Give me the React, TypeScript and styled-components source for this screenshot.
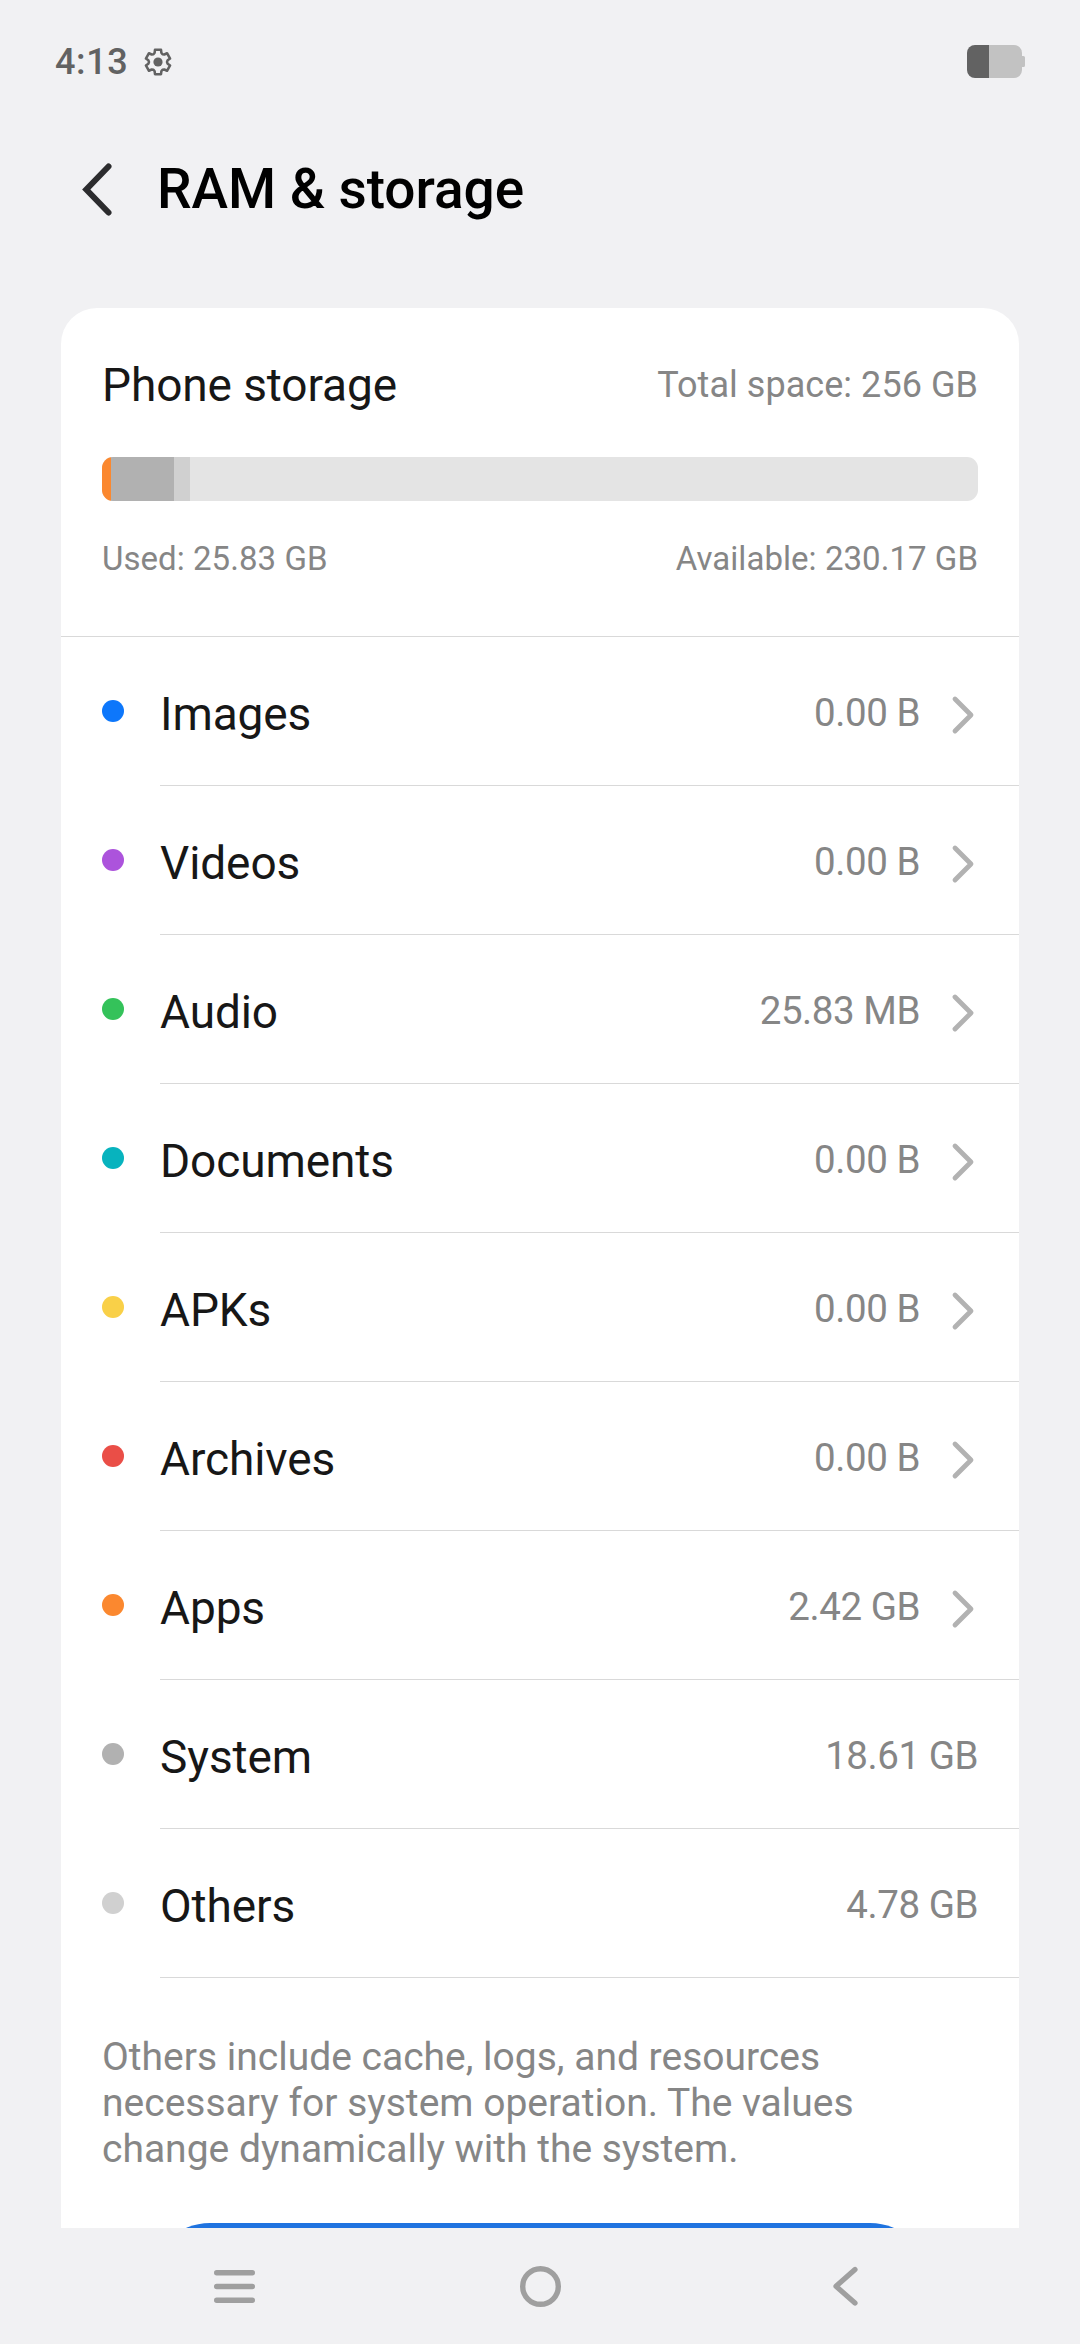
import React from "react";
import styled, { createGlobalStyle } from "styled-components";

const GlobalStyle = createGlobalStyle`
  html, body { margin: 0; padding: 0; background: #f1f1f3; }
  *, *::before, *::after { box-sizing: border-box; }
`;

const Screen = styled.div`
  display: flex;
  flex-direction: column;
  width: 1080px;
  height: 2344px;
  overflow: hidden;
  background: #f1f1f3;
  font-family: Roboto, "Noto Sans", sans-serif;
  color: #171717;
`;

const StatusBar = styled.header`
  flex: none;
  display: flex;
  align-items: center;
  height: 123px;
  padding: 0 55px 0 55px;
`;

const Clock = styled.span`
  font-size: 36px;
  font-weight: 500;
  line-height: 42px;
  letter-spacing: 0.6px;
  color: #626262;
  margin-right: 16px;
`;

const Spacer = styled.div`
  flex: 1;
`;

const Svg = styled.svg`
  display: block;
  flex: none;
`;

const TitleBar = styled.div`
  flex: none;
  display: flex;
  align-items: center;
  gap: 43px;
  height: 132px;
  padding: 0 80px;
`;

const Title = styled.h1`
  margin: 0;
  font-size: 55px;
  font-weight: 500;
  line-height: 64px;
  letter-spacing: -0.05px;
  color: #000;
`;

const Content = styled.main`
  flex: 1;
  min-height: 0;
  padding: 53px 61px 0;
  overflow: hidden;
`;

const Card = styled.section`
  width: 958px;
  height: 2100px;
  background: #fff;
  border-radius: 36px 36px 0 0;
`;

const Summary = styled.div`
  display: flex;
  flex-direction: column;
  height: 329px;
  padding: 50px 41px 0;
  border-bottom: 1px solid #d9d9d9;
`;

const SummaryLine = styled.div`
  display: flex;
  align-items: center;
  justify-content: space-between;
  height: 54px;
`;

const SummaryTitle = styled.h2`
  margin: 0;
  font-size: 46px;
  font-weight: 400;
  line-height: 54px;
  letter-spacing: -0.1px;
`;

const Caption = styled.span<{ $size: number }>`
  font-size: ${(p) => p.$size}px;
  letter-spacing: 0.05px;
  line-height: 44px;
  color: #868686;
`;

const Bar = styled.div`
  display: flex;
  height: 44px;
  margin: 45px 0 31px;
  border-radius: 11px;
  overflow: hidden;
  background: #e4e4e4;
`;

const Segment = styled.div<{ $width: number; $color: string }>`
  width: ${(p) => p.$width}px;
  background: ${(p) => p.$color};
`;

const Row = styled.div`
  display: flex;
  align-items: center;
  height: 149px;
  padding-left: 41px;
`;

const Dot = styled.span<{ $color: string }>`
  flex: none;
  width: 22px;
  height: 22px;
  margin: 0 36px 1px 0;
  border-radius: 50%;
  background: ${(p) => p.$color};
`;

const RowBody = styled.div`
  flex: 1;
  display: flex;
  align-items: center;
  height: 149px;
  padding: 6px 41px 0 0;
  border-bottom: 1px solid #d9d9d9;
`;

const RowLabel = styled.span`
  flex: 1;
  font-size: 46px;
  line-height: 54px;
  letter-spacing: -0.1px;
`;

const RowValue = styled.span`
  font-size: 38.5px;
  line-height: 46px;
  padding-bottom: 3px;
  letter-spacing: -0.45px;
  color: #868686;
`;

const ChevronSlot = styled.span`
  display: flex;
  width: 58px;
  padding: 1px 0 0 30px;
`;

const Note = styled.p`
  width: 820px;
  margin: 0;
  padding: 56px 0 0 41px;
  font-size: 39px;
  line-height: 46px;
  color: #868686;
`;

const PrimaryButton = styled.button`
  display: block;
  width: 780px;
  height: 120px;
  margin: 51px auto 0;
  border: 0;
  border-radius: 60px;
  background: #1f73e0;
`;

const NavBar = styled.nav`
  flex: none;
  display: grid;
  grid-template-columns: repeat(3, 306px);
  justify-content: center;
  justify-items: center;
  align-items: center;
  height: 116px;
  background: #f1f1f3;
`;

type Item = { label: string; value: string; color: string; link?: boolean };

const items: Item[] = [
  { label: "Images", value: "0.00 B", color: "#0d77fb", link: true },
  { label: "Videos", value: "0.00 B", color: "#ac53dc", link: true },
  { label: "Audio", value: "25.83 MB", color: "#34c25a", link: true },
  { label: "Documents", value: "0.00 B", color: "#07b3be", link: true },
  { label: "APKs", value: "0.00 B", color: "#f9d048", link: true },
  { label: "Archives", value: "0.00 B", color: "#ea4e47", link: true },
  { label: "Apps", value: "2.42 GB", color: "#fb882f", link: true },
  { label: "System", value: "18.61 GB", color: "#b1b1b1" },
  { label: "Others", value: "4.78 GB", color: "#d0d0d0" },
];

// Six-toothed gear outline: [radius, degrees from the tooth's centre line]
const toothProfile = [
  [12.6, -14],
  [12.6, 14],
  [9.8, 20],
  [9, 30],
  [9.8, 40],
];
const gearPoints = Array.from({ length: 6 }, (_, tooth) =>
  toothProfile.map(([radius, offset]) => {
    const angle = ((tooth * 60 + offset - 90) * Math.PI) / 180;
    return `${(14 + radius * Math.cos(angle)).toFixed(2)},${(14 + radius * Math.sin(angle)).toFixed(2)}`;
  })
)
  .flat()
  .join(" ");

const GearIcon = () => (
  <Svg width="28" height="28" viewBox="0 0 28 28">
    <polygon points={gearPoints} fill="none" stroke="#626262" strokeWidth="2.5" strokeLinejoin="round" />
    <circle cx="14" cy="14" r="4.6" fill="#626262" />
  </Svg>
);

const BatteryIcon = () => (
  <Svg width="58" height="33" viewBox="0 0 58 33">
    <path
      d="M9 0h38a8 8 0 0 1 8 8v3h1.500a1.500 1.500 0 0 1 1.500 1.500v8a1.500 1.500 0 0 1-1.500 1.500H55v3a8 8 0 0 1-8 8H9z"
      fill="#c2c2c2"
    />
    <path d="M22 0H8a8 8 0 0 0-8 8v17a8 8 0 0 0 8 8h14z" fill="#626262" />
  </Svg>
);

export default function App() {
  return (
    <>
      <GlobalStyle />
      <Screen>
        <StatusBar>
          <Clock>4:13</Clock>
          <GearIcon />
          <Spacer />
          <BatteryIcon />
        </StatusBar>
        <TitleBar>
          <Svg width="34" height="56" viewBox="0 0 34 56" aria-label="Back">
            <path d="M28.500 5.500 6.300 28.500 28.500 51.500" fill="none" stroke="#2c2c2e" strokeWidth="6" strokeLinecap="round" />
          </Svg>
          <Title>RAM &amp; storage</Title>
        </TitleBar>
        <Content>
          <Card>
            <Summary>
              <SummaryLine>
                <SummaryTitle>Phone storage</SummaryTitle>
                <Caption $size={36}>Total space: 256 GB</Caption>
              </SummaryLine>
              <Bar>
                <Segment $width={9} $color="#fb882f" />
                <Segment $width={63} $color="#b1b1b1" />
                <Segment $width={16} $color="#d0d0d0" />
              </Bar>
              <SummaryLine>
                <Caption $size={33}>Used: 25.83 GB</Caption>
                <Caption $size={33}>Available: 230.17 GB</Caption>
              </SummaryLine>
            </Summary>
            {items.map((item) => (
              <Row key={item.label}>
                <Dot $color={item.color} />
                <RowBody>
                  <RowLabel>{item.label}</RowLabel>
                  <RowValue>{item.value}</RowValue>
                  {item.link && (
                    <ChevronSlot>
                      <Svg width="26" height="42" viewBox="0 0 26 42">
                        <path d="M5 5 21 21 5 37" fill="none" stroke="#b2b2b2" strokeWidth="4.800" strokeLinecap="round" strokeLinejoin="round" />
                      </Svg>
                    </ChevronSlot>
                  )}
                </RowBody>
              </Row>
            ))}
            <Note>
              Others include cache, logs, and resources necessary for system operation. The values
              change dynamically with the system.
            </Note>
            <PrimaryButton />
          </Card>
        </Content>
        <NavBar>
          <Svg width="41" height="33" viewBox="0 0 41 33">
            <path d="M2.700 2.700h35.600M2.700 16.500h35.600M2.700 30.300h35.600" stroke="#9f9f9f" strokeWidth="5.400" strokeLinecap="round" />
          </Svg>
          <Svg width="41" height="41" viewBox="0 0 41 41">
            <circle cx="20.5" cy="20.500" r="17.800" fill="none" stroke="#9f9f9f" strokeWidth="5.400" />
          </Svg>
          <Svg width="26" height="40" viewBox="0 0 26 40">
            <path d="M22 3.500 3 20.300 22 37" fill="none" stroke="#9f9f9f" strokeWidth="5.200" strokeLinecap="round" strokeLinejoin="round" />
          </Svg>
        </NavBar>
      </Screen>
    </>
  );
}
